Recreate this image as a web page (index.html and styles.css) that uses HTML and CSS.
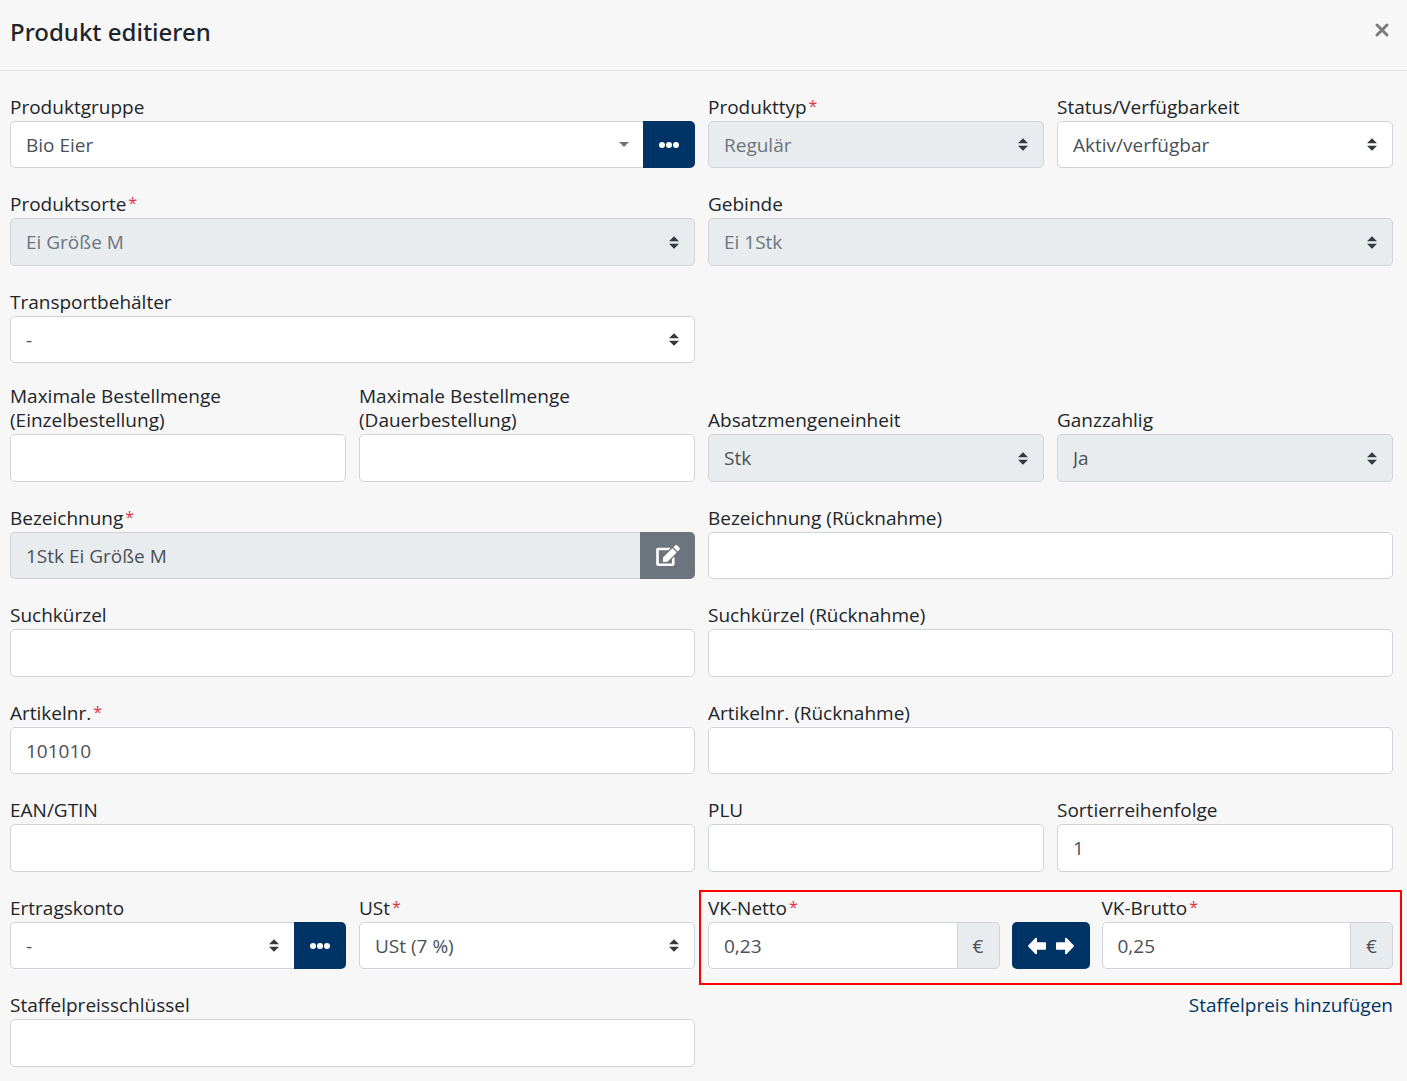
FILE: index.html
```html
<!DOCTYPE html>
<html lang="de">
<head>
<meta charset="utf-8">
<meta name="viewport" content="width=device-width, initial-scale=1">
<title>Produkt editieren</title>
<link rel="stylesheet" href="styles.css">
</head>
<body>
<header class="header">
  <h1 class="title">Produkt editieren</h1>
  <button type="button" class="close" aria-label="Schließen">
    <svg width="16" height="16" viewBox="0 0 16 16"><path d="M3 3l10 10M13 3L3 13" stroke="currentColor" stroke-width="3" stroke-linecap="round"/></svg>
  </button>
</header>
<form class="form">
  <div class="row">
    <div class="field half">
      <label for="gruppe">Produktgruppe</label>
      <div class="group">
        <select id="gruppe" class="control select caret"><option>Bio Eier</option></select>
        <button type="button" class="btn primary dots" aria-label="Produktgruppe bearbeiten"><svg width="20" height="8" viewBox="0 0 20 8" fill="currentColor"><circle cx="3" cy="4" r="3"/><circle cx="10" cy="4" r="3"/><circle cx="17" cy="4" r="3"/></svg></button>
      </div>
    </div>
    <div class="field">
      <label for="typ">Produkttyp<span class="req">*</span></label>
      <select id="typ" class="control select" disabled><option>Regulär</option></select>
    </div>
    <div class="field">
      <label for="status">Status/Verfügbarkeit</label>
      <select id="status" class="control select"><option>Aktiv/verfügbar</option></select>
    </div>
  </div>

  <div class="row">
    <div class="field half">
      <label for="sorte">Produktsorte<span class="req">*</span></label>
      <select id="sorte" class="control select" disabled><option>Ei Größe M</option></select>
    </div>
    <div class="field half">
      <label for="gebinde">Gebinde</label>
      <select id="gebinde" class="control select" disabled><option>Ei 1Stk</option></select>
    </div>
  </div>

  <div class="row">
    <div class="field half">
      <label for="behaelter">Transportbehälter</label>
      <select id="behaelter" class="control select"><option>-</option></select>
    </div>
  </div>

  <div class="row">
    <div class="field">
      <label for="max-einzel">Maximale Bestellmenge<br>(Einzelbestellung)</label>
      <input id="max-einzel" class="control" type="text">
    </div>
    <div class="field">
      <label for="max-dauer">Maximale Bestellmenge<br>(Dauerbestellung)</label>
      <input id="max-dauer" class="control" type="text">
    </div>
    <div class="field">
      <label for="einheit">Absatzmengeneinheit</label>
      <select id="einheit" class="control select locked"><option>Stk</option></select>
    </div>
    <div class="field">
      <label for="ganzzahlig">Ganzzahlig</label>
      <select id="ganzzahlig" class="control select locked"><option>Ja</option></select>
    </div>
  </div>

  <div class="row">
    <div class="field half">
      <label for="bezeichnung">Bezeichnung<span class="req">*</span></label>
      <div class="group">
        <input id="bezeichnung" class="control locked" type="text" value="1Stk Ei Größe M" readonly>
        <button type="button" class="btn secondary" aria-label="Bezeichnung bearbeiten"><svg width="24" height="21" viewBox="0 0 576 512" fill="currentColor"><path d="M402.6 83.2l90.2 90.2c3.8 3.8 3.8 10 0 13.8L274.4 405.6l-92.8 10.3c-12.4 1.4-22.9-9.1-21.5-21.5l10.3-92.8L388.8 83.2c3.8-3.8 10-3.8 13.8 0zm162-22.9l-48.8-48.8c-15.2-15.2-39.9-15.2-55.2 0l-35.4 35.4c-3.8 3.8-3.8 10 0 13.8l90.2 90.2c3.8 3.8 10 3.8 13.8 0l35.4-35.4c15.2-15.3 15.2-40 0-55.2zM384 346.2V448H64V128h229.8c3.2 0 6.2-1.3 8.5-3.5l40-40c7.6-7.6 2.2-20.5-8.5-20.5H48C21.5 64 0 85.5 0 112v352c0 26.5 21.5 48 48 48h352c26.5 0 48-21.5 48-48V306.2c0-10.7-12.9-16-20.5-8.5l-40 40c-2.2 2.3-3.5 5.3-3.5 8.5z"/></svg></button>
      </div>
    </div>
    <div class="field half">
      <label for="bezeichnung-r">Bezeichnung (Rücknahme)</label>
      <input id="bezeichnung-r" class="control" type="text">
    </div>
  </div>

  <div class="row">
    <div class="field half">
      <label for="kuerzel">Suchkürzel</label>
      <input id="kuerzel" class="control" type="text">
    </div>
    <div class="field half">
      <label for="kuerzel-r">Suchkürzel (Rücknahme)</label>
      <input id="kuerzel-r" class="control" type="text">
    </div>
  </div>

  <div class="row">
    <div class="field half">
      <label for="artikelnr">Artikelnr.<span class="req">*</span></label>
      <input id="artikelnr" class="control" type="text" value="101010">
    </div>
    <div class="field half">
      <label for="artikelnr-r">Artikelnr. (Rücknahme)</label>
      <input id="artikelnr-r" class="control" type="text">
    </div>
  </div>

  <div class="row">
    <div class="field half">
      <label for="ean">EAN/GTIN</label>
      <input id="ean" class="control" type="text">
    </div>
    <div class="field">
      <label for="plu">PLU</label>
      <input id="plu" class="control" type="text">
    </div>
    <div class="field">
      <label for="sortierung">Sortierreihenfolge</label>
      <input id="sortierung" class="control" type="text" value="1">
    </div>
  </div>

  <div class="row">
    <div class="field">
      <label for="konto">Ertragskonto</label>
      <div class="group">
        <select id="konto" class="control select"><option>-</option></select>
        <button type="button" class="btn primary dots" aria-label="Ertragskonto bearbeiten"><svg width="20" height="8" viewBox="0 0 20 8" fill="currentColor"><circle cx="3" cy="4" r="3"/><circle cx="10" cy="4" r="3"/><circle cx="17" cy="4" r="3"/></svg></button>
      </div>
    </div>
    <div class="field">
      <label for="ust">USt<span class="req">*</span></label>
      <select id="ust" class="control select"><option>USt (7 %)</option></select>
    </div>
    <div class="prices half">
      <div class="field">
        <label for="netto">VK-Netto<span class="req">*</span></label>
        <div class="group">
          <input id="netto" class="control" type="text" value="0,23">
          <span class="unit">€</span>
        </div>
      </div>
      <button type="button" class="btn primary convert" aria-label="Netto und Brutto umrechnen">
        <svg width="18" height="18" viewBox="0 0 18 18" fill="currentColor"><path d="M9 1.6v3.6h8.2q.8 0 .8.8v6q0 .8-.8.8H9v3.6q-.4 1.2-1.6.6L.4 9.8Q-.3 9 .4 8.2L7.4 1Q8.6.4 9 1.6z"/></svg>
        <svg width="18" height="18" viewBox="0 0 18 18" fill="currentColor"><path d="M9 1.6v3.6H.8Q0 5.2 0 6v6q0 .8.8.8H9v3.6q.4 1.2 1.6.6l7-7.200q.7-.8 0-1.600L10.600 1Q9.400.4 9 1.600z"/></svg>
      </button>
      <div class="field">
        <label for="brutto">VK-Brutto<span class="req">*</span></label>
        <div class="group">
          <input id="brutto" class="control" type="text" value="0,25">
          <span class="unit">€</span>
        </div>
      </div>
    </div>
  </div>

  <div class="row">
    <div class="field half">
      <label for="staffel">Staffelpreisschlüssel</label>
      <input id="staffel" class="control" type="text">
    </div>
    <div class="half add"><a href="#staffelpreis">Staffelpreis hinzufügen</a></div>
  </div>
</form>
</body>
</html>
```
FILE: styles.css
```css
* {
  box-sizing: border-box;
}

body {
  margin: 0;
  background: #f7f7f7;
  color: #212529;
  font-family: "Segoe UI", "Open Sans", "Noto Sans", sans-serif;
  font-size: 19px;
  line-height: 24px;
}

.header {
  display: flex;
  align-items: flex-start;
  justify-content: space-between;
  padding: 16px 17px 22px 10px;
  border-bottom: 1px solid #dee2e6;
}

.title {
  margin: 0;
  font-family: "Segoe UI", "Noto Sans", sans-serif;
  font-size: 24px;
  font-weight: 500;
  line-height: 32px;
}

.close {
  display: flex;
  margin: 6px 0 0;
  padding: 0;
  border: 0;
  background: none;
  color: #7b7b7b;
}

.form {
  display: flex;
  flex-direction: column;
  gap: 21px;
  padding: 21px 14px 14px 10px;
}

.row {
  --control-height: 47px;
  display: grid;
  grid-template-columns: repeat(4, minmax(0, 1fr));
  column-gap: 13px;
  align-items: end;
}

.row:nth-child(even) {
  --control-height: 48px;
}

.half {
  grid-column: span 2;
}

.field {
  display: flex;
  flex-direction: column;
  min-width: 0;
}

label {
  padding: 3px 0 2px;
}

label:has(br) {
  padding-top: 0;
}

.req {
  margin-left: 2px;
  color: #dc3545;
  font-size: 16px;
  line-height: 1;
  vertical-align: 2px;
}

.control {
  width: 100%;
  min-width: 0;
  height: var(--control-height);
  margin: 0;
  padding: 0 15px;
  border: 1px solid #ced4da;
  border-radius: 5px;
  background-color: #fff;
  color: #495057;
  font: inherit;
}

.select {
  appearance: none;
  padding-right: 36px;
  background-image: url("data:image/svg+xml,%3Csvg xmlns='http://www.w3.org/2000/svg' viewBox='0 0 4 5'%3E%3Cpath fill='%23343a40' d='M2 0L0 2h4zm0 5L0 3h4z'/%3E%3C/svg%3E");
  background-position: right 15px center;
  background-repeat: no-repeat;
  background-size: 10px 13px;
}

.select.caret {
  background-image: url("data:image/svg+xml,%3Csvg xmlns='http://www.w3.org/2000/svg' viewBox='0 0 10 5'%3E%3Cpath fill='%236c757d' d='M0 0h10L5 5z'/%3E%3C/svg%3E");
  background-position: right 14px center;
  background-size: 10px 5px;
}

.select:disabled {
  background-color: #e9ecef;
  color: #6c757d;
  opacity: 1;
}

.locked {
  background-color: #e9ecef;
}

.group {
  display: flex;
}

.group .control {
  flex: 1;
  border-right: 0;
  border-radius: 5px 0 0 5px;
}

.btn {
  display: flex;
  flex: none;
  align-items: center;
  justify-content: center;
  width: 55px;
  height: var(--control-height);
  margin: 0;
  padding: 0;
  border: 0;
  border-radius: 5px;
  color: #fff;
}

.group .btn {
  border-radius: 0 5px 5px 0;
}

.primary {
  background: #003366;
}

.secondary {
  background: #6c757d;
}

.dots {
  width: 52px;
}

.unit {
  display: flex;
  align-items: center;
  justify-content: center;
  width: 43px;
  border: 1px solid #ced4da;
  border-radius: 0 5px 5px 0;
  background: #e9ecef;
  color: #495057;
}

.prices {
  position: relative;
  display: flex;
  align-items: flex-end;
  gap: 12px;
}

.prices .field {
  flex: 1;
}

/* Red frame around the price fields */
.prices::after {
  content: "";
  position: absolute;
  inset: -3px -9px -16px;
  border: 2px solid #f00;
  pointer-events: none;
}

.convert {
  gap: 10px;
  width: 78px;
}

.add {
  align-self: start;
  padding-top: 3px;
  text-align: right;
}

.add a {
  color: #003366;
  text-decoration: none;
}
```
